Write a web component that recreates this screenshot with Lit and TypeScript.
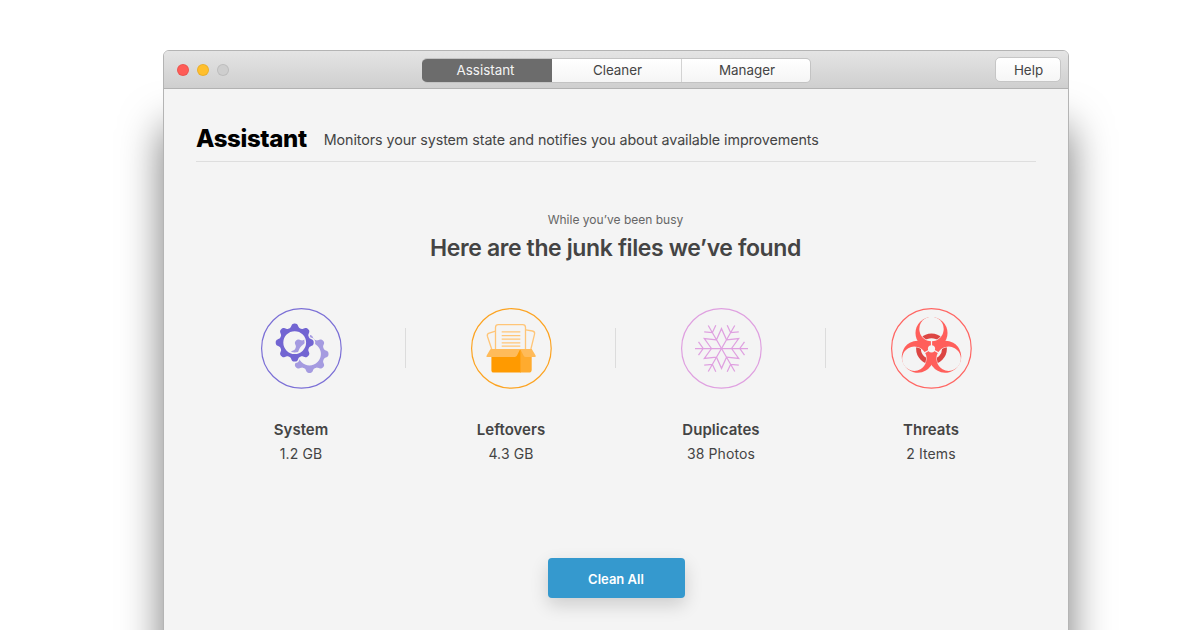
import { LitElement, html, css, svg } from "lit";
import { customElement } from "lit/decorators.js";

const TURNS_6 = [0, 60, 120, 180, 240, 300];
const TURNS_3 = [0, 120, 240];

// Outline of an eight-toothed gear around the origin, followed by its round hole.
const gearPath = (() => {
  const points: string[] = [];
  for (let i = 0; i < 240; i++) {
    const t = (i / 240) * Math.PI * 2;
    const r = 17.1 + (1.9 * Math.tanh(1.5 * Math.cos(8 * t))) / Math.tanh(1.5);
    points.push(`${(r * Math.cos(t)).toFixed(2)} ${(r * Math.sin(t)).toFixed(2)}`);
  }
  return `M${points.join("L")}ZM11.4 0A11.4 11.4 0 1 0 -11.4 0A11.4 11.4 0 1 0 11.4 0Z`;
})();

const gear = (x: number, y: number, color: string, grow = 0) => svg`
  <path d=${gearPath} transform="translate(${x} ${y})" fill=${color} fill-rule="evenodd" stroke=${color} stroke-width=${grow}></path>`;

const systemIcon = svg`
  <mask id="behind" maskUnits="userSpaceOnUse" x="0" y="0" width="100" height="100">
    <rect width="100" height="100" fill="#fff"></rect>
    ${gear(43.7, 44.6, "#000", 3)}
  </mask>
  <g mask="url(#behind)">${gear(58.5, 56, "#a59be0")}</g>
  ${gear(43.7, 44.6, "#7265d2")}`;

const leftoversIcon = svg`
  <g fill="none" stroke="#ffc577" stroke-width="1.3" stroke-linejoin="round">
    <path d="M34.5 33.2L28.2 35.2Q25.8 36 26.4 38.2L30.8 51.5"></path>
    <path d="M64.8 31.8L71.5 33Q74 33.6 73.6 35.8L69.8 51.5"></path>
    <path d="M34.5 52V29.4Q34.5 26.6 37.3 26.6H61.7Q64.5 26.6 64.5 29.4V52"></path>
  </g>
  <path d="M40.7 33.8H59.3M40.7 37.6H59.3M40.7 41.2H59.3M40.7 44.8H59.3M40.7 48.2H59.3" stroke="#ffc577" stroke-width="1.2"></path>
  <path d="M30.4 57H50L52 51.4H60V74.6H32.6Q30.4 74.6 30.4 72.4Z" fill="#ff9a00"></path>
  <path d="M59.4 51H70.7V71.4Q70.7 74.6 67.6 74.6H59.4Z" fill="#ffab2e"></path>
  <path d="M30 51H59.2L56 57.6Q55.3 59 53.8 59H26.3Q25 59 25.7 57.6L29 51.8Q29.4 51 30 51Z" fill="#ffbb5a"></path>
  <path d="M59.2 51H70Q70.8 51 71.2 51.8L74.6 57.6Q75.3 59 74 59H64.6Q63.4 59 62.8 58Z" fill="#ffbb5a"></path>`;

const duplicatesIcon = svg`
  <g transform="translate(50.5 50.5)" fill="none" stroke="#dfa0e0" stroke-width="1.25">
    ${TURNS_6.map(
      (a) => svg`<path transform="rotate(${a})" d="M0 0H26.5M23 -6.7L18.3 0L23 6.7M10 0L17.2 9.9L5 8.66"></path>`
    )}
  </g>`;

const threatsIcon = svg`
  <mask id="cut" maskUnits="userSpaceOnUse" x="-40" y="-40" width="80" height="80">
    <rect x="-40" y="-40" width="80" height="80" fill="#fff"></rect>
    ${TURNS_3.map(
      (a) => svg`<g transform="rotate(${a})"><circle cy="-19.8" r="12.2"></circle><path d="M0 0V-12" stroke="#000" stroke-width="1.2"></path></g>`
    )}
    <circle r="3.6"></circle>
  </mask>
  <clipPath id="lobes">
    ${TURNS_3.map((a) => svg`<circle cy="-19.8" r="11.7" transform="rotate(${a})"></circle>`)}
  </clipPath>
  <g transform="translate(50.5 50.8)">
    <g mask="url(#cut)" fill="#ff5f5b">
      ${TURNS_3.map((a) => svg`<circle cy="-15.8" r="16" transform="rotate(${a})"></circle>`)}
    </g>
    <g clip-path="url(#lobes)"><circle r="13" fill="none" stroke="#dc4643" stroke-width="4.8"></circle></g>
  </g>`;

const CATEGORIES = [
  { name: "System", amount: "1.2 GB", color: "#7b6fd6", icon: systemIcon },
  { name: "Leftovers", amount: "4.3 GB", color: "#fca321", icon: leftoversIcon },
  { name: "Duplicates", amount: "38 Photos", color: "#dfa0e0", icon: duplicatesIcon },
  { name: "Threats", amount: "2 Items", color: "#ff6663", icon: threatsIcon },
];

@customElement("app-root")
export class AppRoot extends LitElement {
  static styles = css`
    :host {
      display: block;
      height: 630px;
      overflow: hidden;
      background: #fff;
      font-family: Inter, "Liberation Sans", sans-serif;
      color: #444;
    }
    * { box-sizing: border-box; }
    .stage { padding: 50px 0 0 163px; }
    .window {
      width: 906px;
      height: 800px;
      border: 1px solid #b4b4b4;
      border-radius: 6px 6px 0 0;
      background: #f4f4f4;
      box-shadow: 0 77px 42px rgba(0, 0, 0, 0.53);
    }
    .titlebar {
      display: grid;
      grid-template-columns: 258px 389px 1fr;
      align-items: center;
      height: 38px;
      padding-right: 7px;
      border-bottom: 1px solid #b2b2b2;
      border-radius: 5px 5px 0 0;
      background: linear-gradient(#e4e4e4, #cfcfcf);
      font-size: 13.4px;
    }
    .lights { display: flex; gap: 8px; padding-left: 13px; }
    .light { width: 12px; height: 12px; border-radius: 50%; border: 1px solid rgba(0, 0, 0, 0.08); }
    .red { background: #ff5c57; }
    .yellow { background: #ffbf2d; }
    .gray { background: #cecece; }
    .tabs {
      display: grid;
      grid-template-columns: 130px 130px 129px;
      height: 25px;
      margin-top: 1px;
      border-radius: 5px;
      overflow: hidden;
      border: 1px solid #c3c3c3;
      border-left: 0;
      background: linear-gradient(#fff, #f5f5f5);
    }
    .tab { display: flex; align-items: center; justify-content: center; border-right: 1px solid #d3d3d3; padding-left: 2px; }
    .tab:last-child { border-right: 0; padding-left: 1px; }
    .active { margin: -1px 0; background: #6c6c6c; color: #f4f4f4; border-right: 0; padding: 0 3px 0 0; }
    .help {
      justify-self: end;
      display: flex;
      align-items: center;
      justify-content: center;
      width: 66px;
      height: 25px;
      padding-left: 1px;
      border: 1px solid #c6c6c6;
      border-radius: 5px;
      background: linear-gradient(#fff, #f6f6f6);
    }
    .body { padding: 0 32px; display: flex; flex-direction: column; }
    .heading {
      display: flex;
      align-items: flex-start;
      gap: 17px;
      height: 73px;
      padding-top: 35px;
      border-bottom: 1px solid #dedede;
    }
    .title { font-size: 24px; line-height: 30px; font-weight: 800; letter-spacing: -0.36px; color: #000; white-space: nowrap; }
    .subtitle { font-size: 14.3px; line-height: 20px; letter-spacing: -0.08px; margin-top: 6px; white-space: nowrap; }
    .intro { text-align: center; padding-top: 50px; }
    .kicker { font-size: 12px; line-height: 16px; color: #666; padding-right: 1px; }
    .found { font-size: 23px; line-height: 30px; font-weight: 600; letter-spacing: -0.38px; padding: 5px 1px 0 0; }
    .grid { display: grid; grid-template-columns: repeat(4, 210px); padding-top: 35px; }
    .cell { display: flex; flex-direction: column; align-items: center; }
    .iconrow { display: flex; width: 210px; align-items: center; }
    .icon { display: block; width: 100px; height: 100px; margin-left: 55px; }
    .rule { width: 1px; height: 40px; margin-left: 54px; background: #dcdcdc; }
    .cell:last-child .rule { visibility: hidden; }
    .name { font-size: 15px; line-height: 20px; font-weight: 600; letter-spacing: 0.03px; margin-top: 22px; }
    .amount { font-size: 14px; line-height: 20px; letter-spacing: 0.12px; margin-top: 4px; }
    .clean {
      align-self: center;
      display: flex;
      align-items: center;
      justify-content: center;
      width: 137px;
      height: 40px;
      margin-top: 94px;
      border-radius: 4px;
      background: #3599ce;
      color: #fff;
      font-size: 13px;
      font-weight: 600;
      padding-top: 1px;
      box-shadow: 0 7px 18px rgba(0, 0, 0, 0.16);
    }
  `;

  render() {
    return html`
      <div class="stage">
        <div class="window">
          <div class="titlebar">
            <div class="lights">
              <span class="light red"></span><span class="light yellow"></span><span class="light gray"></span>
            </div>
            <div class="tabs">
              <div class="tab active">Assistant</div>
              <div class="tab">Cleaner</div>
              <div class="tab">Manager</div>
            </div>
            <div class="help">Help</div>
          </div>
          <div class="body">
            <div class="heading">
              <div class="title">Assistant</div>
              <div class="subtitle">Monitors your system state and notifies you about available improvements</div>
            </div>
            <div class="intro">
              <div class="kicker">While you’ve been busy</div>
              <div class="found">Here are the junk files we’ve found</div>
            </div>
            <div class="grid">
              ${CATEGORIES.map(
                (c) => html`
                  <div class="cell">
                    <div class="iconrow">
                      <svg class="icon" viewBox="0 0 100 100">
                        <circle cx="50.4" cy="50.4" r="39.8" fill="none" stroke=${c.color} stroke-width="1.2"></circle>
                        ${c.icon}
                      </svg>
                      <div class="rule"></div>
                    </div>
                    <div class="name">${c.name}</div>
                    <div class="amount">${c.amount}</div>
                  </div>
                `
              )}
            </div>
            <div class="clean">Clean All</div>
          </div>
        </div>
      </div>
    `;
  }
}
